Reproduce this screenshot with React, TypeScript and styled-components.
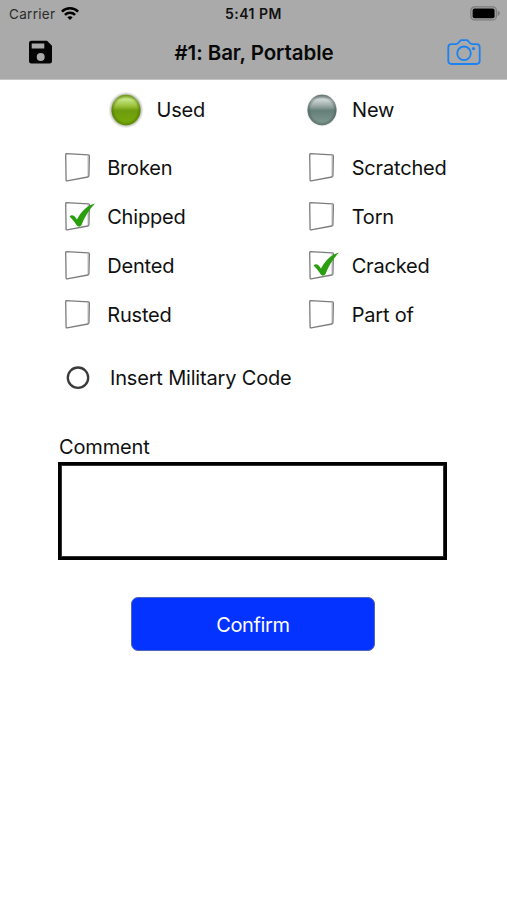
import React, { useState } from "react";
import styled, { createGlobalStyle } from "styled-components";

const GlobalStyle = createGlobalStyle`
  * { box-sizing: border-box; }
  body { margin: 0; background: #fff; }
`;

const Screen = styled.div`
  width: 507px;
  height: 900px;
  overflow: hidden;
  display: flex;
  flex-direction: column;
  background: #fff;
  color: #101010;
  font-family: Inter, "Liberation Sans", sans-serif;
  font-size: 20px;
  line-height: 24px;
`;

const Header = styled.header`
  height: 80px;
  background: #aaaaaa;
  border-bottom: 1px solid #c4c4c4;
`;

const StatusBar = styled.div`
  height: 27px;
  display: grid;
  grid-template-columns: 1fr auto 1fr;
  align-items: center;
  padding: 0 6px 0 9px;
  font-size: 13.5px;
  line-height: 16px;
`;

const Carrier = styled.div`
  display: flex;
  align-items: center;
  gap: 6px;
  color: #2c2c2c;
  letter-spacing: 0.3px;
`;

const Clock = styled.div`
  margin-right: 3px;
  font-weight: 600;
  font-size: 14px;
  letter-spacing: 0.5px;
  color: #111;
`;

const BatterySlot = styled.div`
  display: flex;
  justify-content: flex-end;
`;

const NavBar = styled.div`
  height: 51px;
  display: grid;
  grid-template-columns: 1fr auto 1fr;
  align-items: center;
  padding: 0 26px 0 28px;
`;

const Title = styled.h1`
  margin: 1px 1px 0 0;
  font-size: 20.5px;
  line-height: 24px;
  font-weight: 600;
  letter-spacing: -0.08px;
  color: #080808;
`;

const IconButton = styled.button<{ $end?: boolean }>`
  justify-self: ${(p) => (p.$end ? "end" : "start")};
  display: flex;
  padding: 0;
  border: 0;
  background: none;
`;

const Form = styled.main`
  display: flex;
  flex-direction: column;
  padding: 13px 60px 0 58px;
`;

const Conditions = styled.div`
  display: grid;
  grid-template-columns: 195.5px auto;
  height: 34px;
  padding-left: 50px;
`;

const Defects = styled.div`
  display: grid;
  grid-template-columns: 244.5px auto;
  grid-auto-rows: 49px;
  margin: 16px 0 0 5.5px;
`;

const Choice = styled.div<{ $gap: number }>`
  display: flex;
  align-items: center;
  gap: ${(p) => p.$gap}px;
  letter-spacing: -0.18px;
  white-space: nowrap;
  cursor: pointer;
  svg { flex: none; }
`;

const ConditionChoice = styled(Choice)`
  height: 34px;
`;

const MilitaryRow = styled.div`
  display: flex;
  height: 34px;
  margin-top: 22px;
  padding-left: 8px;
`;

const CommentLabel = styled.label`
  margin: 40px 0 0 1px;
  letter-spacing: -0.15px;
`;

const CommentBox = styled.textarea`
  display: block;
  width: 389px;
  height: 98px;
  margin-top: 3px;
  padding: 8px;
  border: 3px solid #000;
  border-radius: 0;
  box-shadow: inset 0 0 0 1px #333;
  resize: none;
  outline: none;
  font: inherit;
`;

const ConfirmButton = styled.button`
  width: 244px;
  height: 54px;
  margin: 37px 0 0 73px;
  padding: 2px 0 0;
  border: 1px solid #5065b8;
  border-radius: 7px;
  background: #0433ff;
  color: #fff;
  font: inherit;
  letter-spacing: -0.35px;
`;

const Wifi = () => (
  <svg width="18" height="14" viewBox="0 0 18 14" fill="none" stroke="#000" strokeWidth="2.5">
    <path d="M.9 4.6C5.4.2 12.6.2 17.1 4.6" />
    <path d="M3.9 7.9c2.9-2.8 7.3-2.8 10.2 0" />
    <path d="M9 12.900 6.300 10.200c1.500-1.400 3.900-1.400 5.400 0Z" fill="#000" stroke="none" />
  </svg>
);

const Battery = () => (
  <svg width="31" height="15" viewBox="0 0 31 15">
    <rect x=".9" y=".9" width="25.4" height="13" rx="3.5" fill="none" stroke="#7c7c7c" strokeWidth="1.3" />
    <rect x="2.6" y="2.6" width="22" height="9.6" rx="1.8" fill="#000" />
    <path d="M27.6 4.6c3 1.4 3 4.2 0 5.6Z" fill="#7c7c7c" />
  </svg>
);

const Save = () => (
  <svg width="25" height="25" viewBox="0 0 25 25">
    <path
      fillRule="evenodd"
      d="M3.4 .8H19l5 5v15.4A2.4 2.4 0 0 1 21.6 23.6H3.4A2.4 2.4 0 0 1 1 21.2V3.2A2.4 2.4 0 0 1 3.4 .8ZM3.7 3.4V8.5H16.3V3.4ZM12.7 13a4 4 0 1 0 0 8 4 4 0 0 0 0-8Z"
      fill="#050505"
    />
  </svg>
);

const Camera = () => (
  <svg width="34" height="27" viewBox="0 0 34 27" fill="none" stroke="#1c82f2" strokeWidth="1.8">
    <path d="M4.5 5.2H9c1.2 0 1.8-.5 2.5-1.4l1.2-1.5c.6-.8 1.2-1.100 2.100-1.100h4.500c.9 0 1.500.3 2.100 1.100l1.200 1.500c.7.9 1.300 1.400 2.500 1.400h4.400c2 0 3.200 1.200 3.200 3.200v13.400c0 2-1.200 3.200-3.200 3.200h-25c-2 0-3.200-1.200-3.200-3.200V8.400c0-2 1.200-3.200 3.200-3.200Z" />
    <circle cx="17" cy="14.300" r="6.800" />
    <circle cx="26.500" cy="9.600" r="1.600" fill="#1c82f2" stroke="none" />
  </svg>
);

const Orb = ({ on }: { on: boolean }) => {
  const id = on ? "orb-on" : "orb-off";
  return (
    <svg width="36" height="38" viewBox="0 0 36 38">
      <defs>
        <linearGradient id={id} x1="0" y1="0" x2="0" y2="1">
          <stop offset="0" stopColor={on ? "#9fc440" : "#82928f"} />
          <stop offset=".16" stopColor={on ? "#c4e582" : "#ced6d5"} />
          <stop offset=".38" stopColor={on ? "#98be35" : "#96a5a2"} />
          <stop offset=".52" stopColor={on ? "#6d9c0d" : "#647f78"} />
          <stop offset="1" stopColor={on ? "#78ab08" : "#829b93"} />
        </linearGradient>
        <radialGradient id={`${id}-edge`}>
          <stop offset=".76" stopColor={on ? "#456f00" : "#465955"} stopOpacity="0" />
          <stop offset="1" stopColor={on ? "#456f00" : "#465955"} stopOpacity=".6" />
        </radialGradient>
        <radialGradient id={`${id}-halo`}>
          <stop offset=".8" stopColor={on ? "#596343" : "#5c6665"} stopOpacity=".5" />
          <stop offset="1" stopColor="#999" stopOpacity="0" />
        </radialGradient>
      </defs>
      <ellipse cx="18" cy="19" rx={on ? 17.8 : 15.8} ry={on ? 18.5 : 16.8} fill={`url(#${id}-halo)`} />
      <ellipse cx="18" cy="19" rx="14.4" ry="15.2" fill={`url(#${id})`} />
      <ellipse cx="18" cy="19" rx="14.4" ry="15.2" fill={`url(#${id}-edge)`} />
    </svg>
  );
};

const Box = ({ checked }: { checked: boolean }) => (
  <svg width="33" height="32" viewBox="0 0 33 32" fill="none">
    <path d="M2.2 1.7 24.4 2.8Q25.4 2.9 25.4 4L24.9 23.9Q24.8 24.800 23.800 25L3.100 28.900Q2.100 29 2.100 28L1.700 2.600Q1.700 1.700 2.200 1.700Z" stroke="#7c7c7c" strokeWidth="1.300" />
    <path d="M24.100 3.800V24.600" stroke="#999" strokeWidth=".8" />
    {checked && (
      <path d="M5.600 15.400c2.200-2.200 5-.8 7.400 3.100C17 11 22.500 4.800 31 2.600 25.200 8.300 20.600 16.200 17.600 23.800c-1 2.400-3.800 2.200-5 .4-2.200-3.500-4.400-6.300-7-8.800Z" fill="#299f0e" />
    )}
  </svg>
);

const Ring = () => (
  <svg width="24" height="24" viewBox="0 0 24 24">
    <circle cx="12" cy="11.700" r="10.200" fill="none" stroke="#3b3b3b" strokeWidth="2.300" />
  </svg>
);

const defects = ["Broken", "Scratched", "Chipped", "Torn", "Dented", "Cracked", "Rusted", "Part of"];

export default function App() {
  const [used, setUsed] = useState(true);
  const [marked, setMarked] = useState(["Chipped", "Cracked"]);
  const toggle = (name: string) =>
    setMarked((m) => (m.includes(name) ? m.filter((n) => n !== name) : [...m, name]));

  return (
    <Screen>
      <GlobalStyle />
      <Header>
        <StatusBar>
          <Carrier>Carrier <Wifi /></Carrier>
          <Clock>5:41 PM</Clock>
          <BatterySlot><Battery /></BatterySlot>
        </StatusBar>
        <NavBar>
          <IconButton aria-label="Save"><Save /></IconButton>
          <Title>#1: Bar, Portable</Title>
          <IconButton $end aria-label="Camera"><Camera /></IconButton>
        </NavBar>
      </Header>
      <Form>
        <Conditions>
          <ConditionChoice $gap={12.5} onClick={() => setUsed(true)}><Orb on={used} />Used</ConditionChoice>
          <ConditionChoice $gap={12.5} onClick={() => setUsed(false)}><Orb on={!used} />New</ConditionChoice>
        </Conditions>
        <Defects>
          {defects.map((name) => (
            <Choice key={name} $gap={10.7} onClick={() => toggle(name)}>
              <Box checked={marked.includes(name)} />{name}
            </Choice>
          ))}
        </Defects>
        <MilitaryRow>
          <Choice $gap={20}><Ring />Insert Military Code</Choice>
        </MilitaryRow>
        <CommentLabel htmlFor="comment">Comment</CommentLabel>
        <CommentBox id="comment" />
        <ConfirmButton>Confirm</ConfirmButton>
      </Form>
    </Screen>
  );
}
